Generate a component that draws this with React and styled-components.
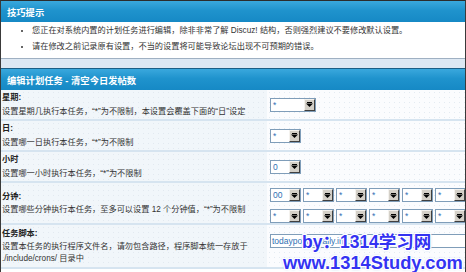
import React from 'react';
import styled, { createGlobalStyle } from 'styled-components';

const Global = createGlobalStyle`
  html, body { margin: 0; padding: 0; background: #fff; }
  body {
    font-family: "Liberation Sans", "Noto Sans CJK SC", sans-serif;
    font-size: 8.2px;
    color: #333;
    overflow: hidden;
  }
`;

const Page = styled.div`
  position: relative;
  width: 466px;
  height: 272px;
  overflow: hidden;
  box-sizing: border-box;
  border-left: 1px solid #3a3a3a;
  border-right: 1px solid #3a3a3a;
  border-top: 1px solid #2c2c2c;
  background: #fff;
`;

const Header = styled.div`
  height: 21px;
  display: flex;
  align-items: center;
  padding-left: 6px;
  background: linear-gradient(#3aa8dd 0%, #1f93cd 45%, #1689c5 100%);
  color: #fff;
  font-weight: bold;
  font-size: 9.3px;
  border-top: ${p => (p.$top ? '1px solid #1b5e86' : 'none')};
`;

const TipList = styled.ul`
  margin: 0;
  padding: 1px 0 3px 31px;
  background: #fff;
  list-style: disc;
`;

const TipItem = styled.li`
  line-height: 16px;
  color: #333;
`;

const TipFooter = styled.div`
  height: 9px;
  border-top: 1px solid #9fb0c2;
  background: #dde8f3;
`;

const Row = styled.div`
  display: grid;
  grid-template-columns: 266px 1fr;
  border-bottom: 2px solid #d6e4f0;
`;

const LabelCell = styled.div`
  display: flex;
  flex-direction: column;
  justify-content: ${p => (p.$top ? 'flex-start' : 'center')};
  padding: ${p => (p.$top ? '2px' : '1px')} 1px 1px 1px;
  background-color: #f1f6fa;
  background-image: radial-gradient(#e2e9f0 0.6px, transparent 0.8px);
  background-size: 5px 5px;
`;

const Title = styled.div`
  font-weight: bold;
  line-height: 13.5px;
  color: #222;
`;

const Desc = styled.div`
  line-height: ${p => p.$lh || 13.5}px;
  color: #333;
`;

const ValueCell = styled.div`
  display: flex;
  align-items: ${p => (p.$top ? 'flex-start' : 'center')};
  padding: ${p => p.$pad || '0'} 0 0 3px;
  background-color: #fbfcfe;
  background-image: radial-gradient(#e4ebf2 0.6px, transparent 0.8px);
  background-size: 5px 5px;
`;

const SelectBox = styled.div`
  box-sizing: border-box;
  width: ${p => p.$w}px;
  height: 14px;
  border: 1px solid #7f9db9;
  background: #fff;
  display: flex;
  flex-shrink: 0;
`;

const SelectText = styled.span`
  flex: 1;
  color: #2f6fb3;
  font-size: 8.5px;
  line-height: 12px;
  padding-left: 2px;
  overflow: hidden;
  white-space: nowrap;
`;

const ArrowBtn = styled.span`
  box-sizing: border-box;
  width: 11px;
  height: 12px;
  background: #d4d0c8;
  border-top: 1px solid #f4f2ee;
  border-left: 1px solid #f4f2ee;
  border-right: 1px solid #404040;
  border-bottom: 1px solid #404040;
  display: flex;
  align-items: center;
  justify-content: center;
`;

const MinuteGrid = styled.div`
  display: grid;
  grid-template-columns: repeat(6, 31px);
  column-gap: 2px;
  row-gap: 7px;
`;

const TextInput = styled.div`
  box-sizing: border-box;
  width: 210px;
  height: 14px;
  border: 1px solid #7f9db9;
  background: #fff;
  color: #2f6fb3;
  font-size: 8.5px;
  line-height: 12px;
  padding-left: 1px;
  white-space: nowrap;
  flex-shrink: 0;
`;

const Watermark = styled.div`
  position: absolute;
  left: 282px;
  top: 232px;
  font-family: "Liberation Sans", "Noto Sans CJK SC", sans-serif;
  font-weight: bold;
  line-height: 19.5px;
  color: #3333f2;
  white-space: nowrap;
  pointer-events: none;
  text-shadow:
    1px 0 #fff, -1px 0 #fff, 0 1px #fff, 0 -1px #fff,
    1px 1px #fff, -1px -1px #fff, 1px -1px #fff, -1px 1px #fff,
    0 0 3px #8fb6dc;
`;

const WmLine = styled.div`
  padding-left: ${p => p.$indent || 0}px;
  font-size: ${p => p.$size || 18}px;
`;

const Arrow = () => (
  <svg width="7" height="5" viewBox="0 0 7 5">
    <rect x="1" y="0" width="5" height="1" fill="#000" />
    <path d="M0 1.5 H7 L3.5 5 Z" fill="#000" />
  </svg>
);

const Select = ({ w, value }) => (
  <SelectBox $w={w}>
    <SelectText>{value}</SelectText>
    <ArrowBtn><Arrow /></ArrowBtn>
  </SelectBox>
);

const minuteValues = ['00', '*', '*', '*', '*', '*', '*', '*', '*', '*', '*', '*'];

export default function App() {
  return (
    <>
      <Global />
      <Page>
        <Header>技巧提示</Header>
        <TipList>
          <TipItem>您正在对系统内置的计划任务进行编辑，除非非常了解 Discuz! 结构，否则强烈建议不要修改默认设置。</TipItem>
          <TipItem>请在修改之前记录原有设置，不当的设置将可能导致论坛出现不可预期的错误。</TipItem>
        </TipList>
        <TipFooter />
        <Header $top>编辑计划任务 - 清空今日发帖数</Header>

        <Row>
          <LabelCell>
            <Title>星期:</Title>
            <Desc>设置星期几执行本任务，“*”为不限制，本设置会覆盖下面的“日”设定</Desc>
          </LabelCell>
          <ValueCell><Select w={46} value="*" /></ValueCell>
        </Row>

        <Row>
          <LabelCell>
            <Title>日:</Title>
            <Desc>设置哪一日执行本任务，“*”为不限制</Desc>
          </LabelCell>
          <ValueCell><Select w={31} value="*" /></ValueCell>
        </Row>

        <Row>
          <LabelCell>
            <Title>小时</Title>
            <Desc>设置哪一小时执行本任务，“*”为不限制</Desc>
          </LabelCell>
          <ValueCell><Select w={31} value="0" /></ValueCell>
        </Row>

        <Row>
          <LabelCell>
            <Title>分钟:</Title>
            <Desc>设置哪些分钟执行本任务，至多可以设置 12 个分钟值，“*”为不限制</Desc>
          </LabelCell>
          <ValueCell $pad="5px">
            <MinuteGrid>
              {minuteValues.map((v, i) => (
                <Select key={i} w={31} value={v} />
              ))}
            </MinuteGrid>
          </ValueCell>
        </Row>

        <Row>
          <LabelCell $top>
            <Title>任务脚本:</Title>
            <Desc $lh={12.5}>设置本任务的执行程序文件名，请勿包含路径，程序脚本统一存放于 ./include/crons/ 目录中</Desc>
          </LabelCell>
          <ValueCell $top $pad="9px">
            <TextInput>todayposts_daily.inc.php</TextInput>
          </ValueCell>
        </Row>

        <Watermark>
          <WmLine $indent={19} $size={17.5}>by：1314学习网</WmLine>
          <WmLine $size={18.3}>www.1314Study.com</WmLine>
        </Watermark>
      </Page>
    </>
  );
}
